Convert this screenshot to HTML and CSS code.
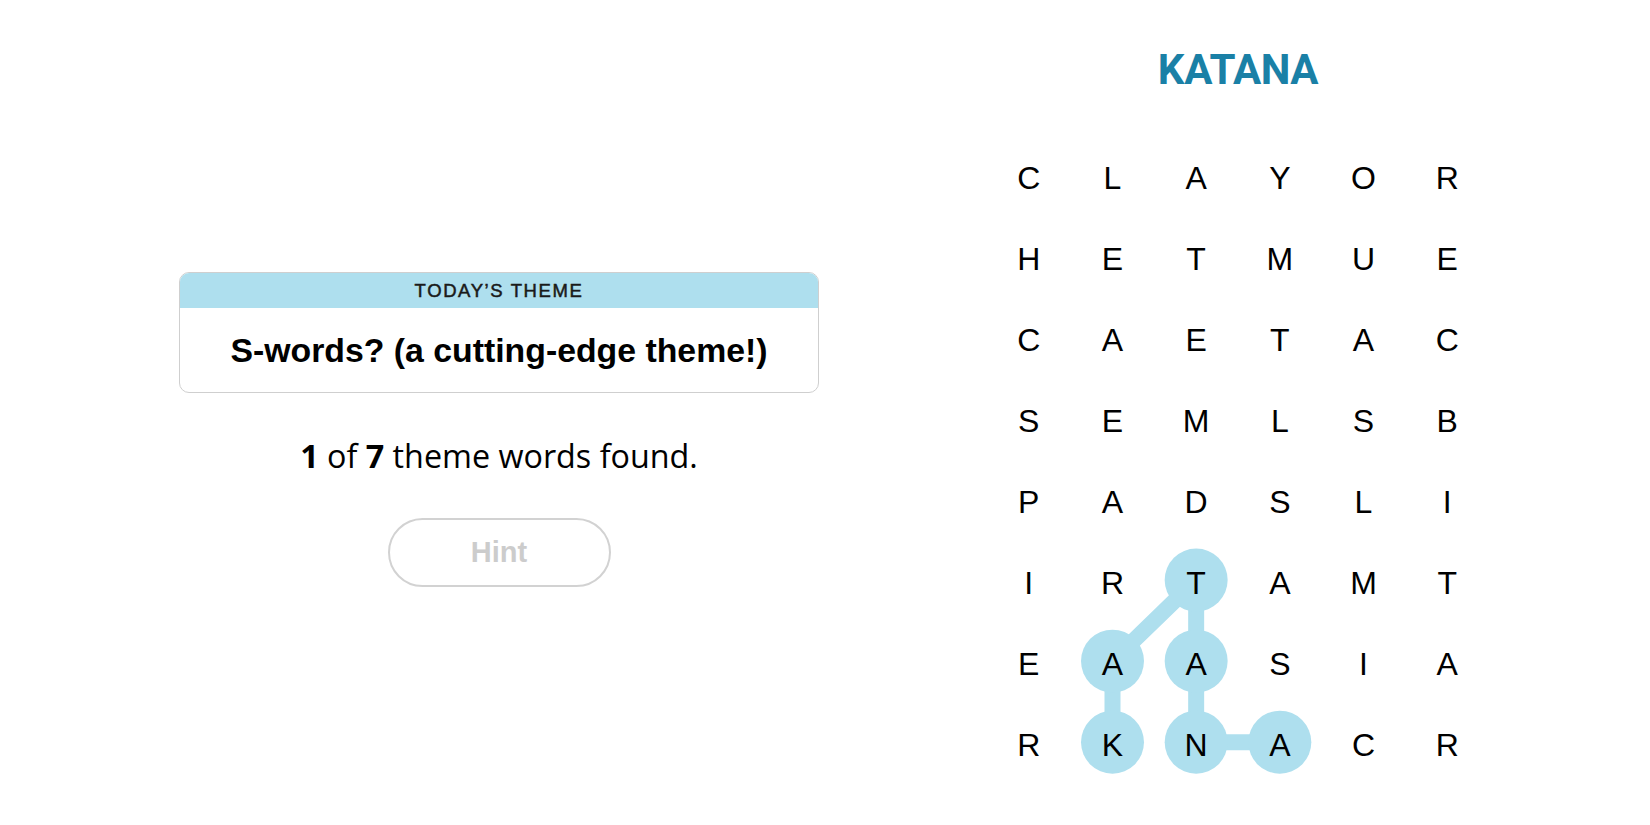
FILE: index.html
```html
<!DOCTYPE html>
<html lang="en">
<head>
<meta charset="utf-8">
<title>Strands</title>
<link rel="stylesheet" href="styles.css">
</head>
<body>
<main class="game">
  <section class="info">
    <div class="theme-card">
      <div class="theme-head">TODAY’S THEME</div>
      <div class="theme-body">S-words? (a cutting-edge theme!)</div>
    </div>
    <p class="progress"><b>1</b> of <b>7</b> theme words found.</p>
    <button class="hint" type="button">Hint</button>
  </section>
  <section class="board">
    <h1 class="word">KATANA</h1>
    <div class="grid-wrap">
      <svg class="path" width="502" height="649" viewBox="0 0 502.2 648.8" aria-hidden="true">
        <polyline points="125.55,605.2 125.55,524.1 209.25,443 209.25,524.1 209.25,605.2 292.95,605.2" fill="none" stroke="#aedfee" stroke-width="16" stroke-linejoin="round"/>
        <circle cx="125.55" cy="605.2" r="31.5" fill="#aedfee"/>
        <circle cx="125.55" cy="524.1" r="31.5" fill="#aedfee"/>
        <circle cx="209.25" cy="443" r="31.5" fill="#aedfee"/>
        <circle cx="209.25" cy="524.1" r="31.5" fill="#aedfee"/>
        <circle cx="209.25" cy="605.2" r="31.5" fill="#aedfee"/>
        <circle cx="292.95" cy="605.2" r="31.5" fill="#aedfee"/>
      </svg>
      <div class="grid">
        <span>C</span><span>L</span><span>A</span><span>Y</span><span>O</span><span>R</span>
        <span>H</span><span>E</span><span>T</span><span>M</span><span>U</span><span>E</span>
        <span>C</span><span>A</span><span>E</span><span>T</span><span>A</span><span>C</span>
        <span>S</span><span>E</span><span>M</span><span>L</span><span>S</span><span>B</span>
        <span>P</span><span>A</span><span>D</span><span>S</span><span>L</span><span>I</span>
        <span>I</span><span>R</span><span>T</span><span>A</span><span>M</span><span>T</span>
        <span>E</span><span>A</span><span>A</span><span>S</span><span>I</span><span>A</span>
        <span>R</span><span>K</span><span>N</span><span>A</span><span>C</span><span>R</span>
      </div>
    </div>
  </section>
</main>
</body>
</html>
```

FILE: styles.css
```css
* { box-sizing: border-box; }

html, body {
  margin: 0;
  padding: 0;
  background: #ffffff;
  color: #000000;
  font-family: "Liberation Sans", Arial, sans-serif;
}

.game {
  display: flex;
  align-items: flex-start;
  width: 1650px;
  height: 825px;
  padding-left: 179px;
  gap: 168px;
}

.info {
  width: 640px;
  padding-top: 272px;
  display: flex;
  flex-direction: column;
  align-items: center;
}

.theme-card {
  width: 640px;
  border: 1px solid #cfcfcf;
  border-radius: 10px;
  overflow: hidden;
}

.theme-head {
  height: 35px;
  background: #aedfee;
  display: flex;
  align-items: center;
  justify-content: center;
  font-family: "Liberation Sans", Arial, sans-serif;
  font-size: 18.5px;
  letter-spacing: 1.6px;
  color: #1a1a1a;
  -webkit-text-stroke: 0.5px #1a1a1a;
}

.theme-body {
  height: 84px;
  display: flex;
  align-items: center;
  justify-content: center;
  font-family: "Liberation Sans", Arial, sans-serif;
  font-weight: 700;
  font-size: 33.8px;
  color: #000;
}

.progress {
  margin: 42px 0 0;
  height: 40px;
  line-height: 40px;
  font-family: "Open Sans", "Liberation Sans", sans-serif;
  font-size: 32.3px;
  color: #000;
}

.progress b { font-weight: 700; }

.hint {
  margin-top: 43px;
  width: 223px;
  height: 69px;
  border: 2px solid #d2d2d2;
  border-radius: 35px;
  background: #fff;
  font-family: "Liberation Sans", Arial, sans-serif;
  font-weight: 700;
  font-size: 29px;
  color: #cccccc;
  padding: 0;
}

.board {
  width: 502px;
  display: flex;
  flex-direction: column;
  align-items: center;
}

.word {
  margin: 49px 0 0;
  height: 42px;
  line-height: 42px;
  font-family: Roboto, "Liberation Sans", sans-serif;
  font-weight: 700;
  font-size: 42px;
  letter-spacing: -0.4px;
  color: #1a80a6;
}

.grid-wrap {
  position: relative;
  margin-top: 46px;
  width: 502.2px;
  height: 648.8px;
}

.path {
  position: absolute;
  left: 0;
  top: 0;
}

.grid {
  position: relative;
  display: grid;
  grid-template-columns: repeat(6, 83.7px);
  grid-template-rows: repeat(8, 81.1px);
}

.grid span {
  display: flex;
  align-items: center;
  justify-content: center;
  padding-top: 1px;
  font-family: "Liberation Sans", Arial, sans-serif;
  font-size: 32px;
  color: #000;
}
```
